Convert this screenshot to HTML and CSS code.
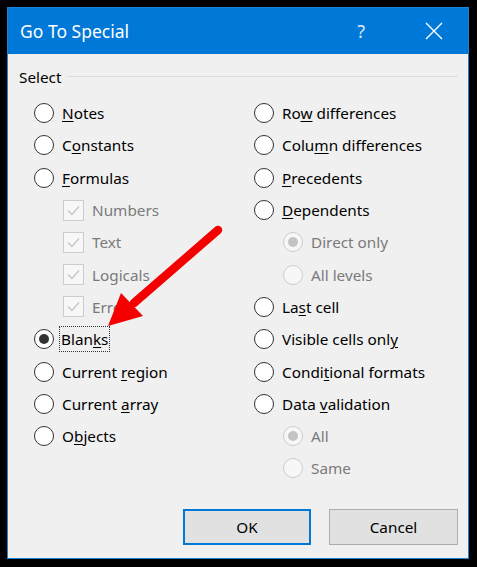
FILE: index.html
```html
<!DOCTYPE html>
<html lang="en">

<head>
  <meta charset="UTF-8" />
  <title>Go To Special</title>
  <link rel="stylesheet" href="styles.css">
</head>

<body>
  <div class="dialog">
    <div class="titlebar">
      <span class="title">Go To Special</span>
      <span class="help">?</span>
      <svg class="close" width="18" height="18" viewBox="0 0 18 18">
        <path d="M1 1L17 17M17 1L1 17" stroke="#fff" stroke-width="1.4" fill="none" />
      </svg>
    </div>

    <div class="content">
      <div class="group-head">
        <span>Select</span>
        <div class="group-line"></div>
      </div>

      <div class="options">
        <div class="col">
          <div class="opt"><span class="radio"></span><span class="label"><u>N</u>otes</span></div>
          <div class="opt"><span class="radio"></span><span class="label">C<u>o</u>nstants</span></div>
          <div class="opt"><span class="radio"></span><span class="label"><u>F</u>ormulas</span></div>
          <div class="opt sub off"><span class="check"><svg width="21" height="21" viewBox="0 0 21 21"><path d="M5 10.5L9 14.5L16 6.5" stroke="#c6c6c6" stroke-width="1.4" fill="none" /></svg></span><span class="label">Numbers</span></div>
          <div class="opt sub off"><span class="check"><svg width="21" height="21" viewBox="0 0 21 21"><path d="M5 10.5L9 14.5L16 6.5" stroke="#c6c6c6" stroke-width="1.4" fill="none" /></svg></span><span class="label">Text</span></div>
          <div class="opt sub off"><span class="check"><svg width="21" height="21" viewBox="0 0 21 21"><path d="M5 10.5L9 14.5L16 6.5" stroke="#c6c6c6" stroke-width="1.4" fill="none" /></svg></span><span class="label">Logicals</span></div>
          <div class="opt sub off"><span class="check"><svg width="21" height="21" viewBox="0 0 21 21"><path d="M5 10.5L9 14.5L16 6.5" stroke="#c6c6c6" stroke-width="1.4" fill="none" /></svg></span><span class="label">Errors</span></div>
          <div class="opt"><span class="radio on"></span><span class="label focus">Blan<u>k</u>s</span></div>
          <div class="opt"><span class="radio"></span><span class="label">Current <u>r</u>egion</span></div>
          <div class="opt"><span class="radio"></span><span class="label">Current <u>a</u>rray</span></div>
          <div class="opt"><span class="radio"></span><span class="label">O<u>b</u>jects</span></div>
        </div>
        <div class="col">
          <div class="opt"><span class="radio"></span><span class="label">Ro<u>w</u> differences</span></div>
          <div class="opt"><span class="radio"></span><span class="label">Colu<u>m</u>n differences</span></div>
          <div class="opt"><span class="radio"></span><span class="label"><u>P</u>recedents</span></div>
          <div class="opt"><span class="radio"></span><span class="label"><u>D</u>ependents</span></div>
          <div class="opt sub off"><span class="radio on"></span><span class="label">Direct only</span></div>
          <div class="opt sub off"><span class="radio"></span><span class="label">All levels</span></div>
          <div class="opt"><span class="radio"></span><span class="label">La<u>s</u>t cell</span></div>
          <div class="opt"><span class="radio"></span><span class="label">Visible cells onl<u>y</u></span></div>
          <div class="opt"><span class="radio"></span><span class="label">Condi<u>t</u>ional formats</span></div>
          <div class="opt"><span class="radio"></span><span class="label">Data <u>v</u>alidation</span></div>
          <div class="opt sub off"><span class="radio on"></span><span class="label">All</span></div>
          <div class="opt sub off"><span class="radio"></span><span class="label">Same</span></div>
        </div>
      </div>

      <div class="buttons">
        <button class="btn default">OK</button>
        <button class="btn">Cancel</button>
      </div>
    </div>

    <!-- red annotation arrow pointing at Blanks -->
    <svg class="arrow" width="477" height="567" viewBox="0 0 477 567">
      <line x1="218" y1="230" x2="134" y2="303" stroke="#f50000" stroke-width="8.5" stroke-linecap="round" />
      <path d="M108 326L121 293L143 316Z" fill="#f50000" />
    </svg>
  </div>
</body>

</html>
```

FILE: styles.css
```css
body {
  margin: 0;
  padding: 7px;
  background: #000;
  font-family: "Noto Sans", "Open Sans", sans-serif;
  font-size: 15.3px;
  color: #000;
}

.dialog {
  position: relative;
  width: 460px;
  height: 550px;
  border: 1px solid #1883d7;
  background: #f0f0f0;
  display: flex;
  flex-direction: column;
}

.titlebar {
  height: 46px;
  background: #0078d7;
  color: #fff;
  display: flex;
  align-items: center;
  padding-left: 12px;
}

.title {
  font-size: 17.5px;
  flex: 1;
}

.help {
  font-size: 18px;
  margin-right: 60px;
  color: #dbe9f7;
}

.close {
  margin-right: 25px;
}

.content {
  flex: 1;
  display: flex;
  flex-direction: column;
  padding: 0 10px 13px 11px;
}

.group-head {
  display: flex;
  align-items: center;
  height: 20px;
  margin-top: 13px;
  gap: 6px;
}

.group-line {
  flex: 1;
  border-top: 1px solid #dcdcdc;
  margin-top: -1px;
}

.options {
  display: grid;
  grid-template-columns: 220px 1fr;
  margin-top: 10px;
  padding-left: 15px;
}

.opt {
  height: 32.3px;
  display: flex;
  align-items: center;
  gap: 8px;
}

.opt.sub {
  padding-left: 29px;
}

.opt.off {
  color: #7a7a7a;
}

.radio {
  width: 18px;
  height: 18px;
  border: 1px solid #333;
  border-radius: 50%;
  background: #fff;
  display: flex;
  align-items: center;
  justify-content: center;
  flex: none;
}

.radio.on::after {
  content: "";
  width: 10px;
  height: 10px;
  border-radius: 50%;
  background: #333;
}

.off .radio {
  border-color: #cccccc;
  background: #f7f7f7;
}

.off .radio.on::after {
  background: #c4c4c4;
}

.check {
  width: 19px;
  height: 19px;
  border: 1px solid #cccccc;
  background: #f7f7f7;
  flex: none;
  display: flex;
}

.check svg {
  margin: -1px;
}

u {
  text-underline-offset: 2px;
}

.label.focus {
  outline: 1px dotted #333;
  outline-offset: 0;
  padding: 2px 1px;
  margin-left: -2px;
}

.buttons {
  margin-top: auto;
  display: flex;
  justify-content: flex-end;
  gap: 18px;
}

.btn {
  width: 129px;
  height: 36px;
  font-family: inherit;
  font-size: 15.3px;
  background: #e1e1e1;
  border: 1px solid #adadad;
  color: #000;
}

.btn.default {
  width: 128px;
  border: 2px solid #0078d7;
}

.arrow {
  position: absolute;
  left: -8px;
  top: -8px;
  pointer-events: none;
}
```
